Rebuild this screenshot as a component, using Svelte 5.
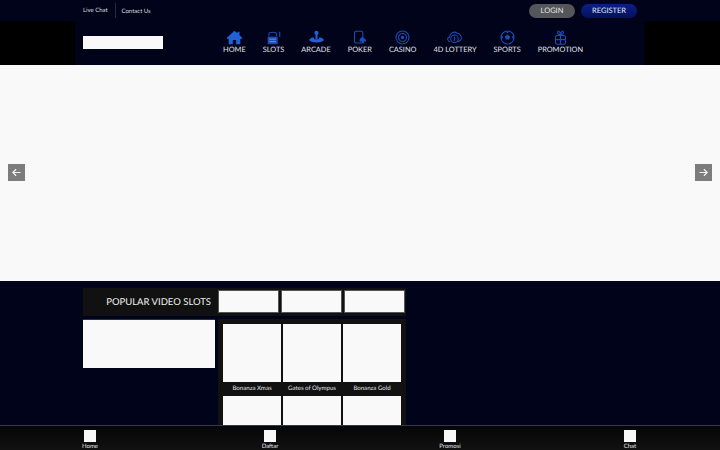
<script>
  const menu = ['home', 'slots', 'arcade', 'poker', 'casino', 'lottery', 'sports', 'promotion'];
  const labels = {
    home: 'HOME', slots: 'SLOTS', arcade: 'ARCADE', poker: 'POKER',
    casino: 'CASINO', lottery: '4D LOTTERY', sports: 'SPORTS', promotion: 'PROMOTION'
  };
  const games = ['Bonanza Xmas', 'Gates of Olympus', 'Bonanza Gold', '', '', ''];
  const bottom = ['Home', 'Daftar', 'Promosi', 'Chat'];
</script>

<div class="page">
  <div class="topbar">
    <div class="top-inner">
      <div class="top-links">
        <span class="link first">Live Chat</span>
        <span class="link">Contact Us</span>
      </div>
      <div class="auth">
        <span class="btn login">LOGIN</span>
        <span class="btn register">REGISTER</span>
      </div>
    </div>
  </div>

  <header class="header">
    <div class="head-inner">
      <div class="logo"></div>
      <nav class="menu">
        {#each menu as item}
          <div class="menu-item">
            <svg class="icon" viewBox="0 0 20 18" aria-hidden="true">
              {#if item === 'home'}
                <path class="solid bright" d="M10 1 0.5 9.500 2 11l1-.9V17h5v-5h4v5h5v-6.900l1 .9 1.500-1.500L16 6.200V2h-2.500v1.900z"/>
              {:else if item === 'slots'}
                <path class="solid" d="M3 8h12v9H3z"/>
                <path class="line" d="M4.500 7.500V5c0-3 9-3 9 0v2.500M17.500 2v6.500"/>
                <path class="wire" d="M5 11h8M5 14h8"/>
              {:else if item === 'arcade'}
                <circle class="solid bright" cx="10" cy="3.500" r="2.500"/>
                <path class="solid bright" d="M8.800 5h2.400v6H8.800z"/>
                <path class="solid bright" d="M1 12c2-3 4.500-3 6-3v2h6V9c1.500 0 4 0 6 3-2 4-16 4-18 0z"/>
              {:else if item === 'poker'}
                <rect class="line" x="4" y="1.500" width="10" height="14" rx="2"/>
                <path class="solid" d="M13 8c-1.500 1.500-3 2.800-3 4.500 0 1.500 1.800 2 3 1-.2 1-.5 1.800-1 2.500h4c-.5-.7-.8-1.500-1-2.500 1.200 1 3 .5 3-1C18 10.800 14.500 9.500 13 8z"/>
              {:else if item === 'casino'}
                <circle class="line" cx="10" cy="9" r="7.800"/>
                <circle class="line" cx="10" cy="9" r="4.800"/>
                <circle class="solid" cx="10" cy="9" r="2"/>
              {:else if item === 'lottery'}
                <path class="line" d="M5 14C1.500 14 .5 9.500 4 8.500 4.500 4 9 1 13 3.500c3.500.5 6 4.500 5 7.500-1 2.500-3 3-5 3"/>
                <circle class="line" cx="10" cy="10.500" r="4.500"/>
                <path class="solid" d="M9.300 8h1.400v5H9.300z"/>
              {:else if item === 'sports'}
                <circle class="line" cx="10" cy="9" r="7.800"/>
                <path class="solid" d="M10 5.500l3.200 2.300-1.200 3.700H8l-1.200-3.700zM9 1.500h2v2H9zM2.500 7l2 .5-.5 3-2-.5zM17.500 7l-2 .5.500 3 2-.5z"/>
              {:else}
                <rect class="line" x="4" y="6.500" width="12" height="10.500" rx="2"/>
                <path class="line" d="M4 11.500h12M10 6.500V17"/>
                <path class="line" d="M10 5.500C8.500 5.500 6 4.500 6.500 2.500s3 -1 3.500 3c.5-4 3-5 3.500-3s-2 3-3.500 3z"/>
              {/if}
            </svg>
            <span class="menu-label">{labels[item]}</span>
          </div>
        {/each}
      </nav>
    </div>
  </header>

  <section class="hero">
    <button class="arrow prev" aria-label="Previous">
      <svg viewBox="0 0 16 16"><path d="M13 8H4M7.500 4 3.500 8l4 4"/></svg>
    </button>
    <button class="arrow next" aria-label="Next">
      <svg viewBox="0 0 16 16"><path d="M3 8h9M8.500 4l4 4-4 4"/></svg>
    </button>
  </section>

  <main class="content">
    <div class="tabs">
      <h2 class="tabs-title">POPULAR VIDEO SLOTS</h2>
      <div class="tab"></div>
      <div class="tab"></div>
      <div class="tab"></div>
    </div>
    <div class="columns">
      <div class="banner"></div>
      <div class="games">
        {#each games as game}
          <div class="game">
            <div class="thumb"></div>
            {#if game}<span class="game-name">{game}</span>{/if}
          </div>
        {/each}
      </div>
    </div>
  </main>

  <footer class="bottom-nav">
    {#each bottom as item}
      <div class="bottom-item">
        <div class="bottom-icon"></div>
        <span class="bottom-label">{item}</span>
      </div>
    {/each}
  </footer>
</div>

<style>
  :global(body) {
    margin: 0;
    background: #00031a;
  }

  .page {
    position: relative;
    width: 720px;
    height: 450px;
    overflow: hidden;
    background: #00031a;
    font-family: Lato, "Noto Sans", sans-serif;
    text-rendering: geometricPrecision;
    color: #eee;
  }

  .topbar {
    height: 21px;
    background: #00031a;
  }

  .top-inner {
    width: 554px;
    height: 100%;
    margin-left: 83px;
    display: flex;
    justify-content: space-between;
    align-items: center;
  }

  .top-links {
    display: flex;
    align-items: center;
    font-size: 6px;
    color: #dcdcdc;
  }

  .link {
    padding-top: 1px;
  }

  .link.first {
    width: 32px;
    margin-right: 5.500px;
    border-right: 1px solid #222a40;
    line-height: 14px;
  }

  .auth {
    display: flex;
    gap: 6px;
  }

  .btn {
    height: 14px;
    border-radius: 7px;
    display: flex;
    align-items: center;
    justify-content: center;
    font-size: 7.500px;
    line-height: 1;
  }

  .login {
    width: 46px;
    background: #55565a;
    color: #e6e6e6;
  }

  .register {
    width: 56px;
    background: linear-gradient(#0a1f8a, #041059);
    color: #e4e8ff;
  }

  .header {
    height: 44px;
    background: #000;
  }

  .head-inner {
    width: 570px;
    height: 100%;
    margin-left: 75px;
    background: #00031a;
    display: flex;
    align-items: center;
    box-sizing: border-box;
    padding-left: 7.500px;
  }

  .logo {
    width: 80px;
    height: 13px;
    margin-bottom: 2px;
    background: #f9f9f9;
  }

  .menu {
    display: flex;
    margin-left: 60.500px;
    gap: 17px;
  }

  .menu-item {
    display: flex;
    flex-direction: column;
    align-items: center;
    padding-bottom: 2px;
  }

  .icon {
    width: 17px;
    height: 15px;
  }

  .solid {
    fill: #1a4cb8;
  }

  .solid.bright {
    fill: #1f62d8;
  }

  .line {
    fill: none;
    stroke: #1a4cb8;
    stroke-width: 1.300;
  }

  .wire {
    fill: none;
    stroke: #7f9fe0;
    stroke-width: 1;
  }

  .menu-label {
    padding-top: 1px;
    font-size: 7.400px;
    line-height: 8px;
    color: #e2e4ea;
    white-space: nowrap;
  }

  .hero {
    position: relative;
    height: 216px;
    background: #f9f9f9;
  }

  .arrow {
    position: absolute;
    top: 99px;
    width: 17px;
    height: 17px;
    padding: 2px;
    border: 0;
    background: #7c7c7c;
    display: flex;
  }

  .arrow svg {
    width: 13px;
    height: 13px;
    fill: none;
    stroke: #f2f2f2;
    stroke-width: 1.500;
  }

  .prev {
    left: 8px;
  }

  .next {
    right: 8px;
  }

  .content {
    padding: 7px 0 0 82.500px;
  }

  .tabs {
    width: 323.500px;
    height: 28px;
    background: #111;
    display: flex;
    align-items: center;
    gap: 2px;
    box-sizing: border-box;
    padding-bottom: 1px;
  }

  .tabs-title {
    width: 133.500px;
    margin: 0;
    padding: 1px 5px 0 0;
    box-sizing: border-box;
    text-align: right;
    font-size: 9.500px;
    font-weight: 400;
    color: #f2f2f2;
    white-space: nowrap;
  }

  .tab {
    width: 59px;
    height: 21px;
    border: 1px solid #555;
    background: #f9f9f9;
  }

  .columns {
    display: flex;
    align-items: flex-start;
    gap: 3.500px;
    margin-top: 3px;
  }

  .banner {
    width: 132px;
    height: 49px;
    background: #f9f9f9;
    border-top: 1px solid #1a2a80;
    box-sizing: border-box;
  }

  .games {
    width: 188px;
    padding: 5px 5px 0;
    box-sizing: border-box;
    background: #111;
    display: grid;
    grid-template-columns: repeat(3, 58px);
    gap: 0 2px;
  }

  .game {
    height: 72px;
    display: flex;
    flex-direction: column;
    align-items: center;
  }

  .thumb {
    width: 58px;
    height: 58px;
    flex: none;
    background: #f9f9f9;
  }

  .game-name {
    padding-top: 1px;
    font-size: 6.100px;
    line-height: 11px;
    color: #e2e2e2;
    white-space: nowrap;
  }

  .bottom-nav {
    position: absolute;
    left: 0;
    right: 0;
    bottom: 0;
    height: 25px;
    background: linear-gradient(#050505, #111);
    border-top: 1px solid #2233a0;
    display: grid;
    grid-template-columns: repeat(4, 180px);
    box-sizing: border-box;
  }

  .bottom-item {
    display: flex;
    flex-direction: column;
    align-items: center;
    padding-top: 4px;
  }

  .bottom-icon {
    width: 12px;
    height: 12px;
    background: #f9f9f9;
  }

  .bottom-label {
    padding-top: 1px;
    font-size: 6px;
    line-height: 7px;
    color: #e2e2e2;
  }
</style>
